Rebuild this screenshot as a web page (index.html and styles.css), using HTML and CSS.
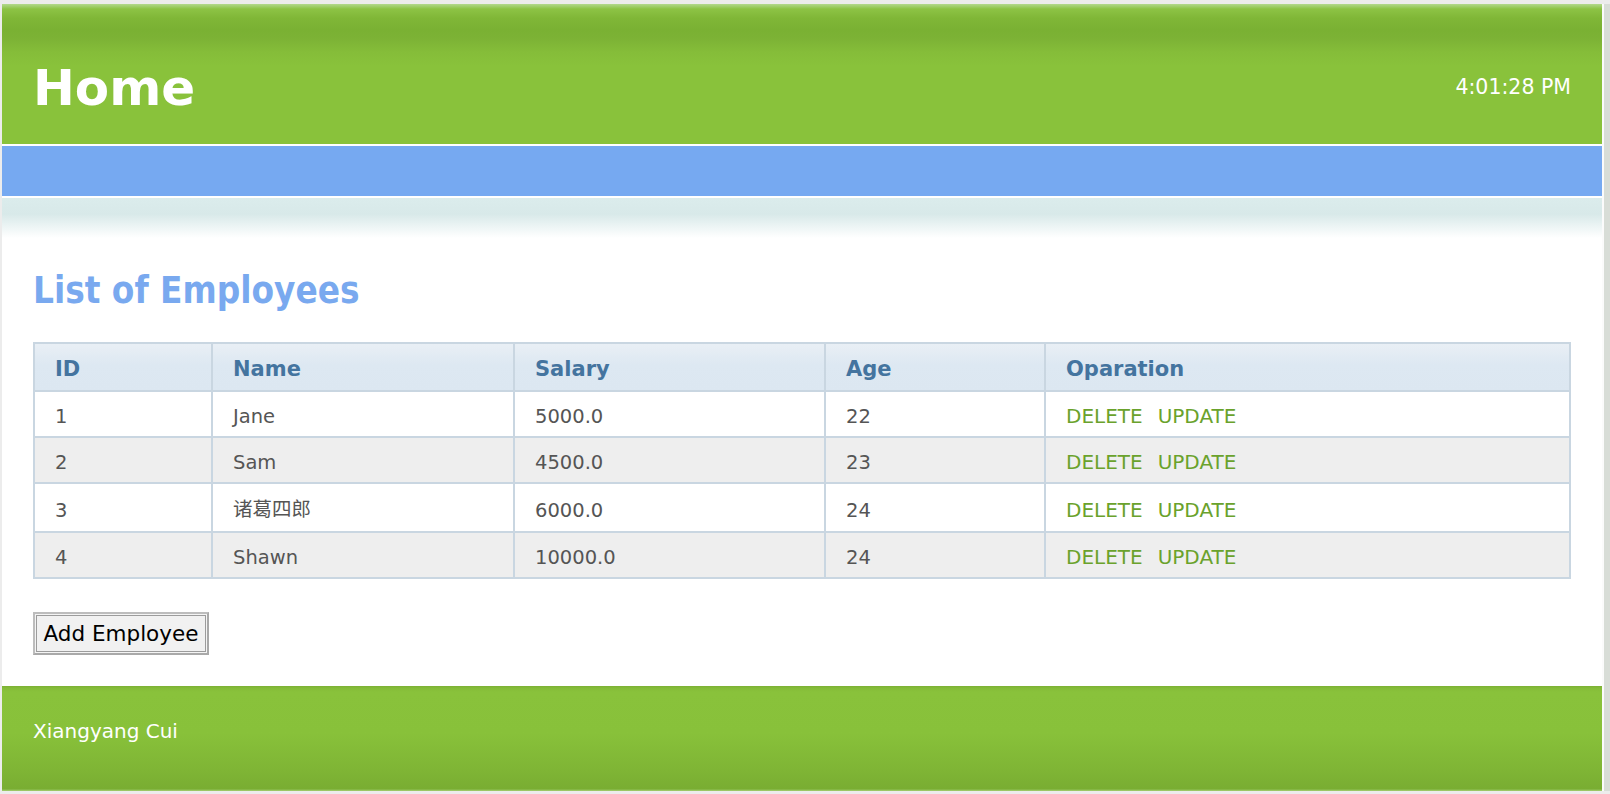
FILE: index.html
```html
<!DOCTYPE html>
<html lang="en">
<head>
<meta charset="utf-8">
<title>Home</title>
<link rel="stylesheet" href="styles.css">
</head>
<body>
<div class="page">
  <header class="masthead">
    <h1 class="title">Home</h1>
    <span class="clock">4:01:28 PM</span>
  </header>
  <nav class="nav"></nav>
  <div class="fade"></div>
  <main class="content">
    <h2 class="heading">List of Employees</h2>
    <table class="grid">
      <colgroup>
        <col class="c-id"><col class="c-name"><col class="c-salary"><col class="c-age"><col class="c-op">
      </colgroup>
      <thead>
        <tr><th>ID</th><th>Name</th><th>Salary</th><th>Age</th><th>Oparation</th></tr>
      </thead>
      <tbody>
        <tr><td>1</td><td>Jane</td><td>5000.0</td><td>22</td><td class="op"><a href="#">DELETE</a><a href="#">UPDATE</a></td></tr>
        <tr><td>2</td><td>Sam</td><td>4500.0</td><td>23</td><td class="op"><a href="#">DELETE</a><a href="#">UPDATE</a></td></tr>
        <tr><td>3</td><td lang="zh">诸葛四郎</td><td>6000.0</td><td>24</td><td class="op"><a href="#">DELETE</a><a href="#">UPDATE</a></td></tr>
        <tr><td>4</td><td>Shawn</td><td>10000.0</td><td>24</td><td class="op"><a href="#">DELETE</a><a href="#">UPDATE</a></td></tr>
      </tbody>
    </table>
    <button class="add-btn" type="button">Add Employee</button>
  </main>
  <footer class="footer">Xiangyang Cui</footer>
</div>
</body>
</html>
```
FILE: styles.css
```css
html, body {
  margin: 0;
  padding: 0;
}
body {
  background: #ececec;
  font-family: "DejaVu Sans", Verdana, sans-serif;
  width: 1610px;
  height: 794px;
  overflow: hidden;
}
.page {
  margin: 4px 0 0 2px;
  width: 1600px;
  background: #fff;
  border-right: 2px solid #fbfbfb;
  box-shadow: 6px 0 0 0 #d8ddd7;
}
.masthead {
  box-sizing: border-box;
  height: 140px;
  display: flex;
  justify-content: space-between;
  align-items: flex-start;
  padding: 0 31px 0 31px;
  background: linear-gradient(to bottom,
    #b2d98c 0px, #a3d072 2px, #8dc345 5px, #80b737 14px,
    #7ab133 26px, #7cb235 34px, #85bd39 48px, #89c23b 62px, #89c23b 100%);
}
.title {
  margin: 54px 0 0;
  font-family: "DejaVu Sans", Verdana, sans-serif;
  font-weight: bold;
  font-size: 50px;
  line-height: 60px;
  color: #fff;
}
.clock {
  margin-top: 71px;
  font-family: "DejaVu Sans", Verdana, sans-serif;
  font-size: 20.5px;
  line-height: 24px;
  color: #fff;
}
.nav {
  display: block;
  margin-top: 2px;
  height: 50px;
  background: #76a9f1;
}
.fade {
  margin-top: 2px;
  height: 40px;
  background: linear-gradient(to bottom, #dbecec 0%, #d8e9e9 40%, #ffffff 100%);
}
.content {
  padding: 0 31px 31px;
}
.heading {
  margin: 32px 0 30px;
  font-family: "DejaVu Sans Condensed", "DejaVu Sans", sans-serif;
  font-stretch: condensed;
  font-weight: bold;
  font-size: 36.5px;
  line-height: 42px;
  color: #79a9ef;
}
.grid {
  width: 100%;
  table-layout: fixed;
  border-collapse: collapse;
  border: 2px solid #c9d6e1;
}
.c-id { width: 178px; }
.c-name { width: 302px; }
.c-salary { width: 311px; }
.c-age { width: 220px; }
.grid th, .grid td {
  border: 2px solid #c9d6e1;
  text-align: left;
  padding: 13px 21px 8px 20px;
  font-size: 19.5px;
  line-height: 23px;
  color: #555;
}
.grid th {
  padding: 13px 21px 9px 20px;
  font-size: 21px;
  line-height: 24px;
  font-weight: bold;
  color: #44749f;
  background: linear-gradient(to bottom, #e9eff5 0%, #dde8f2 45%, #dce7f1 100%);
}
.grid td[lang="zh"] {
  font-family: "DejaVu Sans", "Noto Sans CJK SC", sans-serif;
  line-height: 26px;
}
.grid tbody tr:nth-child(even) td {
  background: #eeeeee;
}
.op a {
  font-size: 20px;
  color: #6aa22c;
  text-decoration: none;
}
.op a + a {
  margin-left: 15px;
}
.add-btn {
  display: block;
  box-sizing: border-box;
  margin-top: 33px;
  width: 176px;
  height: 43px;
  padding: 0;
  font-family: "DejaVu Sans", Verdana, sans-serif;
  font-size: 21.5px;
  color: #000;
  background: #f1f1f1;
  border: 2px solid #bdbdbd;
  border-right-color: #a9a9a9;
  border-bottom-color: #a9a9a9;
  box-shadow: inset 0 0 0 1px #f4f4f4, inset 0 0 0 2px #9c9c9c;
}
.footer {
  box-sizing: border-box;
  height: 105px;
  padding: 34px 31px 0;
  font-size: 20px;
  line-height: 23px;
  color: #fff;
  background: linear-gradient(to bottom,
    #7cb035 0px, #84bb38 2px, #89c23b 6px, #88c13a 45%, #7fb535 80%, #79ad32 98%, #a5cf74 100%);
}
```
